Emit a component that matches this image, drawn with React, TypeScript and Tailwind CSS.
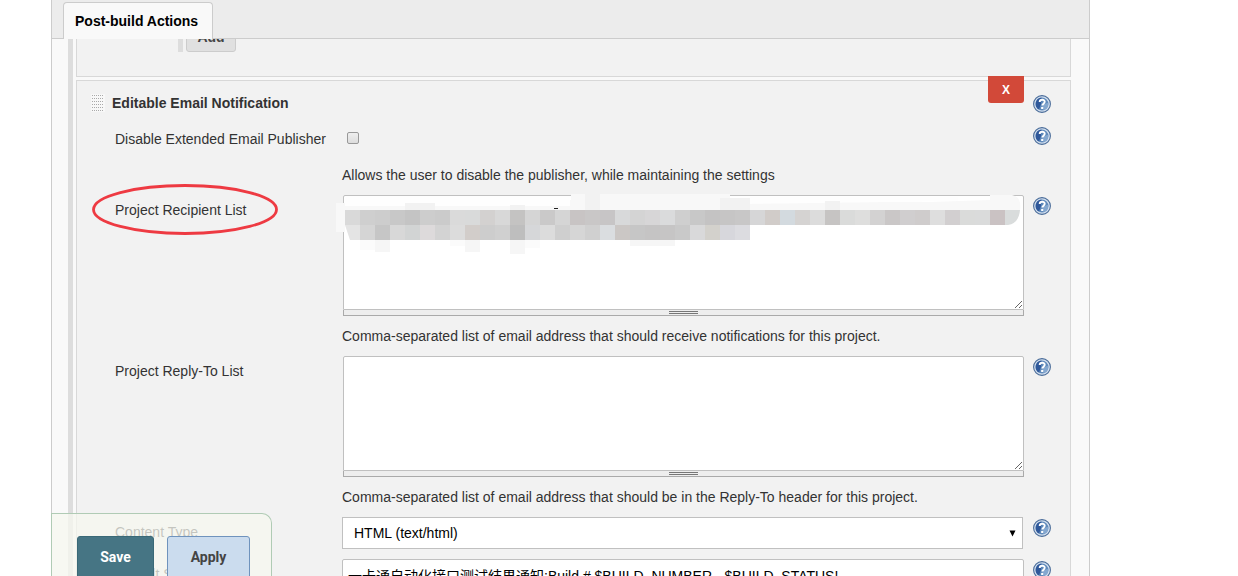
import React from 'react'
import { clsx } from 'clsx'

const TOP_TILES = [
  '#d9d9d9', '#cfcfcf', '#cdcdcd', '#c8c8c8', '#c4c4c4', '#cdcdcd', '#cbcbcb', '#dadada', '#d9dada', '#d3d1d0', '#d8d8d8', '#c4c3c2',
  '#d5d5d5', '#cac9c9', '#d5d5d5', '#c8c4c4', '#c9c7c7', '#c7c5c6', '#d8d9da', '#d4d4d4', '#d7d6d7', '#dadbdc', '#cfcfcf', '#c8c8c8',
  '#c4c3c3', '#c6c5c5', '#c8c7c7', '#d6d6d7', '#d1ccc9', '#d3dadf', '#d5d3d2', '#dcdcdc', '#c6c4c3', '#dadbda', '#dededd',
  '#d3d2d2', '#cac7c7', '#d0cecf', '#cfcccc', '#dedede', '#d2cfd0', '#dadbda', '#dadbdb', '#cac2c3', '#d9dcdc',
]

const BOTTOM_TILES = [
  '#d5d5d5', '#c6c6c6', '#d8d8d8', '#d2d4d4', '#dddadb', '#d3d3d3', '#dcdcdc', '#d2cdca', '#cdcdcd', '#d0d0d0', '#bebebe', '#d6d7d9',
  '#dcdcdc', '#cfcfcf', '#d6d6d6', '#d0d0d0', '#dadde0', '#cbc7c5', '#c6c6c6', '#c5c4c4', '#c6c5c5', '#c9c9c9', '#d9d9da', '#d3d1cc',
  '#d7d7dc', '#dcdce0',
]

const HelpIcon = () => (
  <svg width="18" height="18" viewBox="0 0 18 18" aria-hidden="true">
    <circle cx="9" cy="9" r="8.4" fill="#d3dfee" stroke="#4a6c99" strokeWidth="1.1" />
    <circle cx="9" cy="9" r="6.4" fill="#5f8abb" />
    <path d="M8.5 2.6A6.4 6.4 0 0 0 6 14.6L8 9z" fill="#2f589a" />
    <path d="M9.5 9.5l5.8-1.8A6.4 6.4 0 0 1 10.5 15.2z" fill="#84a7cf" />
    <path d="M6.7 7.1c0-3.1 5-3 5-.3 0 1.9-2.4 1.8-2.4 3.8" fill="none" stroke="#fff" strokeWidth="1.9" />
    <circle cx="9.2" cy="12.9" r="1.2" fill="#fff" />
  </svg>
)

const HelpLink = ({ topic, className }: { topic: string; className?: string }) => (
  <a href="#help" aria-label={`Help for ${topic}`} className={clsx('block h-[18px] w-[18px]', className)}>
    <HelpIcon />
  </a>
)

type RowProps = {
  id: string
  label: string
  mark?: React.ReactNode
  children: React.ReactNode
}

const Row = ({ id, label, mark, children }: RowProps) => (
  <div className="grid grid-cols-[227px_1fr_18px] pl-[38px] pr-[19px]">
    <div className="relative pt-[5px]">
      <label htmlFor={id}>{label}</label>
      {mark}
    </div>
    <div className="min-w-0 pr-[9px]">{children}</div>
    <HelpLink topic={label} className="mt-0.5" />
  </div>
)

const ResizableArea = ({ id, children }: { id: string; children?: React.ReactNode }) => (
  <div className="relative pl-px">
    <textarea
      id={id}
      className="block h-[115px] w-full resize-y rounded-t-xs border border-[#c0c0c0] bg-white px-1.5 py-1 outline-none"
    />
    <div className="flex h-1.5 items-center justify-center border border-t-0 border-[#aaa] bg-[#eee]">
      <span className="h-[3px] w-[29px] border-y border-[#777]" />
    </div>
    {children}
  </div>
)

// Censored recipient addresses
const Mosaic = () => (
  <svg className="pointer-events-none absolute -left-1.5 -top-2 h-[70px] w-[690px]" viewBox="336 187 690 70" aria-hidden="true">
    <path d="M336 203h9v-3h226v-6h14v-3h15v3h130v4h88v4h112l60-2v-5h22q10 2 8 15H345v22h-9z" fill="#f8f8f8" />
    <path d="M345 196h225v10H345zM740 197h218v4l-218 3z" fill="#fefefe" />
    <path d="M405 203h30v7h-30zM510 205h15v5h-15zM585 191h15v19h-15zM720 198h30v12h-30zM825 201h15v9h-15z" fill="#f2f2f2" />
    <path d="M375 240h15v12h-15zM465 240h15v12h-15zM510 240h15v14h-15zM630 240h45v6h-45z" fill="#f6f6f6" />
    <path d="M360 240h15v10h-15zM450 240h15v6h-15zM525 240h15v8h-15z" fill="#fbfbfb" />
    <path d="M345 225h15v15h-10z" fill="#e4e4e4" />
    {TOP_TILES.map((fill, i) => (
      <rect key={i} x={345 + i * 15} y="210" width="15" height="15" fill={fill} />
    ))}
    {BOTTOM_TILES.map((fill, i) => (
      <rect key={i} x={360 + i * 15} y="225" width="15" height="15" fill={fill} />
    ))}
    <path d="M1020 210q-1 13-12 15h12z" fill="#fff" />
    <path d="M554 208h4v1h-4z" fill="#222" />
  </svg>
)

const RedCircle = () => (
  <svg className="pointer-events-none absolute -left-6 -top-3 h-[54px] w-[190px]" viewBox="0 0 190 54" aria-hidden="true">
    <ellipse cx="94" cy="26.5" rx="91.5" ry="24" fill="none" stroke="#ee3a42" strokeWidth="2.8" />
  </svg>
)

const Grip = () => (
  <svg width="14" height="18" viewBox="0 0 14 18" className="bg-[#f8f8f8]" aria-hidden="true">
    {[1, 4, 7, 10, 13, 16].map((y) =>
      [1, 3, 5, 7, 9, 11].map((x) => <rect key={`${x}-${y}`} x={x} y={y} width="1" height="1" fill="#aaa" />)
    )}
  </svg>
)

const EmailNotification = () => (
  <section className="border border-[#d8d8d8] bg-[#f2f2f2]">
    <header className="flex h-11 items-center pl-3.5 pr-[19px]">
      <Grip />
      <h2 className="ml-[7px] flex-1 font-bold">Editable Email Notification</h2>
      <button
        type="button"
        aria-label="Delete Editable Email Notification"
        className="-mt-[5px] h-[27px] w-9 self-start rounded-b-[3px] bg-[#d24939] text-xs font-bold text-white"
      >
        X
      </button>
      <HelpLink topic="Editable Email Notification" className="ml-[9px] mt-0.5" />
    </header>

    <div className="grid grid-cols-[227px_1fr_18px] pl-[38px] pr-[19px]">
      <label htmlFor="disable" className="pt-1">Disable Extended Email Publisher</label>
      <div className="pl-[5px] pt-[7px]">
        <input
          id="disable"
          type="checkbox"
          className="block h-3 w-3 appearance-none rounded-xs border border-[#999] bg-linear-to-b from-[#eee] to-[#ddd]"
        />
      </div>
      <HelpLink topic="Disable Extended Email Publisher" className="mt-0.5" />
      <p className="col-start-2 mb-2.5 mt-4">Allows the user to disable the publisher, while maintaining the settings</p>
    </div>

    <Row id="recipients" label="Project Recipient List" mark={<RedCircle />}>
      <ResizableArea id="recipients">
        <Mosaic />
      </ResizableArea>
      <p className="my-2.5">Comma-separated list of email address that should receive notifications for this project.</p>
    </Row>

    <Row id="reply-to" label="Project Reply-To List">
      <ResizableArea id="reply-to" />
      <p className="my-2.5">Comma-separated list of email address that should be in the Reply-To header for this project.</p>
    </Row>

    <Row id="content-type" label="Content Type">
      <div className="relative mb-2.5 mr-px">
        <select
          id="content-type"
          className="block h-8 w-full appearance-none border border-[#c0c0c0] bg-white px-[11px] text-black outline-none"
        >
          <option>HTML (text/html)</option>
        </select>
        <svg className="pointer-events-none absolute right-[7px] top-[13px]" width="7" height="7" viewBox="0 0 7 7" aria-hidden="true">
          <path d="M0.5 0.5h6L3.5 6.5z" fill="#000" />
        </svg>
      </div>
    </Row>

    <Row id="subject" label="Default Subject">
      <input
        id="subject"
        type="text"
        defaultValue="一卡通自动化接口测试结果通知:Build # $BUILD_NUMBER - $BUILD_STATUS!"
        className="block h-8 w-full rounded-xs border border-[#c0c0c0] bg-white px-[5px] text-black outline-none"
      />
    </Row>
  </section>
)

const App = () => {
  return (
    <div className="relative h-screen overflow-hidden bg-white pl-[51px] pr-[148px] font-['Liberation_Sans','Noto_Sans_CJK_SC',sans-serif] text-sm leading-5 text-[#333]">
      <main className="h-full border-x border-[#ccc] bg-[#f9f9f9]">
        <nav className="flex h-[39px] items-end border-b border-[#ccc] bg-[#ececec] pl-[11px]">
          <a
            href="#post-build"
            className="-mb-px flex h-[37px] min-w-[150px] items-center rounded-t border border-b-0 border-[#ccc] bg-[#f9f9f9] px-[11px] font-bold text-black"
          >
            Post-build Actions
          </a>
        </nav>

        <div className="ml-4 mr-[18px] border-l-[5px] border-[#ddd] pl-[3px]">
          <section className="mb-[3px] h-[38px] border border-t-0 border-[#d8d8d8] bg-[#f2f2f2] pl-[101px]">
            <div className="flex h-[13px] overflow-hidden">
              <div className="flex h-full flex-col justify-end border-l-[5px] border-[#ddd] pl-[3px]">
                <button
                  type="button"
                  className="h-[26px] w-[50px] shrink-0 rounded-[3px] border border-[#ccc] bg-[#e0e0e0] pb-1 text-sm font-bold leading-4 text-[#444]"
                >
                  Add
                </button>
              </div>
            </div>
          </section>
          <EmailNotification />
        </div>
      </main>

      <div className="fixed bottom-0 left-[51px] flex h-[63px] gap-[13px] overflow-hidden rounded-tr-[10px] border border-b-0 border-[#b0cbb5] bg-[#f5f7ef]/75 pl-[25px] pr-[21px] pt-[22px] font-['Roboto',sans-serif] text-sm font-bold">
        <button type="button" className="h-[42px] w-[77px] shrink-0 rounded-t-[3px] border border-[#3a6977] bg-[#467584] text-white">
          Save
        </button>
        <button type="button" className="h-[42px] w-[83px] shrink-0 rounded-t-[3px] border border-[#6f93bd] bg-[#cbdcee] text-[#444]">
          Apply
        </button>
      </div>
    </div>
  )
}

export default App
